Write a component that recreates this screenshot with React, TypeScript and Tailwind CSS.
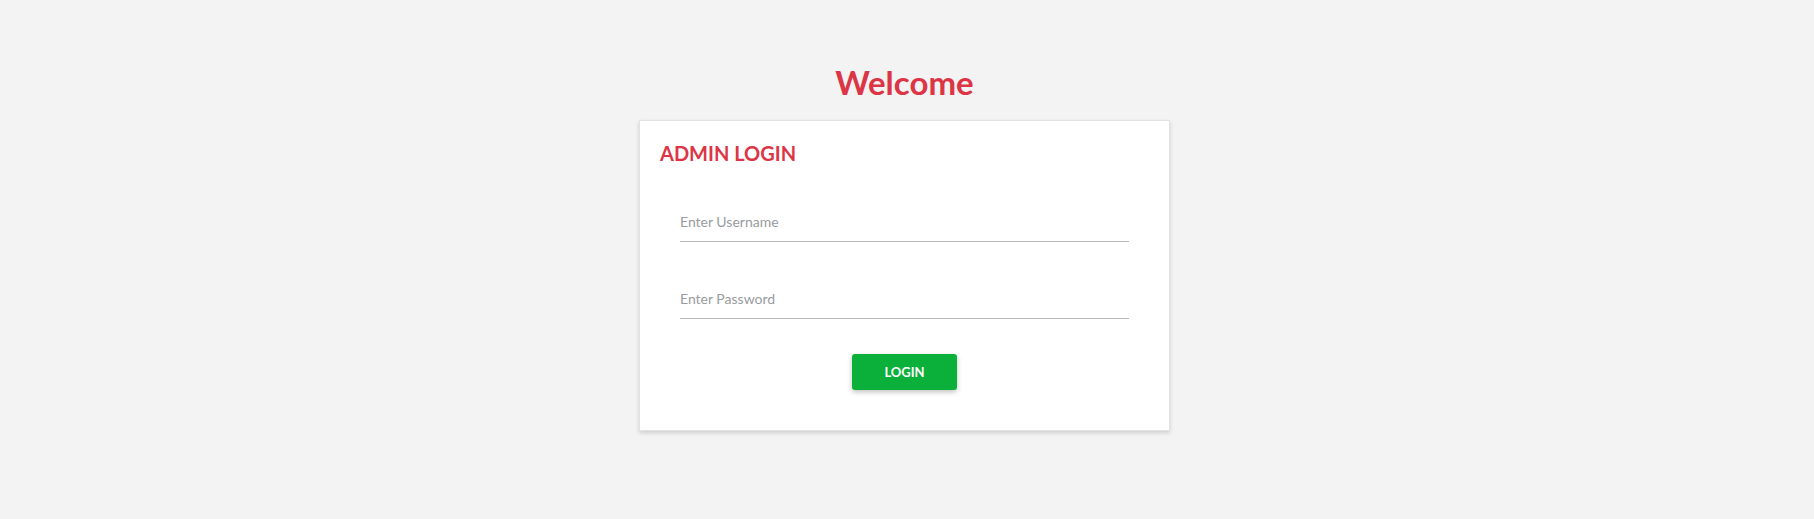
import React from "react";

export default function App() {
  return (
    <div
      className="min-h-screen w-full bg-[#f3f3f3] pt-[62px]"
      style={{ fontFamily: "Lato, 'Open Sans', sans-serif" }}
    >
      <div className="flex flex-col items-center pr-[5px]">
        <h1 className="text-[33px] leading-[41px] font-bold text-[#dc3545]">Welcome</h1>
        <div className="mt-[17px] w-[531px] bg-white border border-[#e2e2e2] shadow-[0_2px_4px_rgba(0,0,0,0.15)] p-5">
          <h2 className="text-[20px] leading-[24px] font-bold text-[#dc3545]">ADMIN LOGIN</h2>
          <div className="px-5 mt-[46px] flex flex-col">
            <input
              type="text"
              placeholder="Enter Username"
              className="w-full h-[31px] pt-0 pb-[10px] leading-[20px] text-[14px] border-b border-[#b9b9b9] outline-none placeholder:text-[#999ba0] text-[#333]"
            />
            <input
              type="password"
              placeholder="Enter Password"
              className="mt-[46px] w-full h-[31px] pt-0 pb-[10px] leading-[20px] text-[14px] border-b border-[#b9b9b9] outline-none placeholder:text-[#999ba0] text-[#333]"
            />
            <div className="flex justify-center mt-[35px] mb-5">
              <button className="w-[105px] h-[36px] pt-[2px] rounded-[3px] bg-[#0bb03a] text-white text-[13px] font-bold shadow-[0_2px_5px_rgba(0,0,0,0.25)]">
                LOGIN
              </button>
            </div>
          </div>
        </div>
      </div>
    </div>
  );
}
